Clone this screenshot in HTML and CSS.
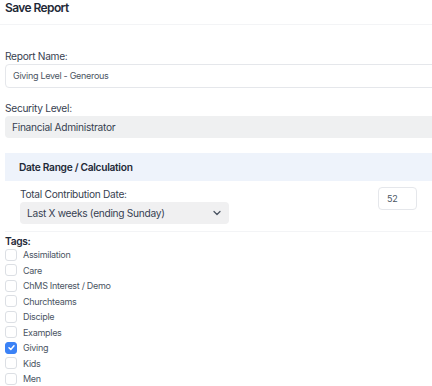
FILE: index.html
```html
<!DOCTYPE html>
<html>
<head>
<meta charset="utf-8">
<link rel="stylesheet" href="styles.css">
</head>
<body>
<div class="page">
  <h1 class="title">Save Report</h1>
  <div class="body">
    <div class="field">
      <label class="label">Report Name:</label>
      <div class="input">Giving Level - Generous</div>
    </div>
    <div class="field">
      <label class="label">Security Level:</label>
      <div class="readonly">Financial Administrator</div>
    </div>
    <div class="section-head">Date Range / Calculation</div>
    <div class="date-row">
      <div class="date-field">
        <label class="label">Total Contribution Date:</label>
        <div class="select">
          <span>Last X weeks (ending Sunday)</span>
          <svg class="chev" width="8" height="6" viewBox="0 0 8 6"><path d="M1 1.5 L4 4.5 L7 1.5" fill="none" stroke="#4b5563" stroke-width="1.3" stroke-linecap="round" stroke-linejoin="round"/></svg>
        </div>
      </div>
      <div class="num">52</div>
    </div>
    <div class="tags">
      <div class="tags-title">Tags:</div>
      <ul class="tag-list">
        <li><span class="cb"></span>Assimilation</li>
        <li><span class="cb"></span>Care</li>
        <li><span class="cb"></span>ChMS Interest / Demo</li>
        <li><span class="cb"></span>Churchteams</li>
        <li><span class="cb"></span>Disciple</li>
        <li><span class="cb"></span>Examples</li>
        <li><span class="cb checked"><svg width="9" height="9" viewBox="0 0 9 9"><path d="M2 4.7 L3.8 6.4 L7 2.8" fill="none" stroke="#fff" stroke-width="1.5" stroke-linecap="round" stroke-linejoin="round"/></svg></span>Giving</li>
        <li><span class="cb"></span>Kids</li>
        <li><span class="cb"></span>Men</li>
      </ul>
    </div>
  </div>
</div>
</body>
</html>
```
FILE: styles.css
```css
html, body {
  margin: 0;
  padding: 0;
  background: #fff;
  overflow: hidden;
}
body {
  font-family: Inter, "Noto Sans", sans-serif;
  color: #374151;
}
.page {
  width: 460px;
}
.title {
  margin: 0;
  padding: 1px 5px 0;
  height: 23px;
  font-size: 12px;
  font-weight: 600;
  letter-spacing: -0.6px;
  line-height: 14px;
  color: #1f2937;
  border-bottom: 1px solid #f3f4f6;
}
.body {
  padding: 25px 0 0 5px;
}
.field {
  display: flex;
  flex-direction: column;
}
.label {
  font-size: 10.2px;
  letter-spacing: -0.3px;
  line-height: 13px;
  color: #374151;
  margin-bottom: 1px;
}
.input {
  height: 22px;
  border: 1px solid #e5e7eb;
  border-radius: 4px;
  padding-left: 7px;
  font-size: 9px;
  letter-spacing: -0.3px;
  line-height: 22px;
  color: #4b5563;
  margin-bottom: 14px;
}
.readonly {
  height: 22px;
  background: #eff0f1;
  border-radius: 4px;
  padding-left: 7px;
  font-size: 10.2px;
  letter-spacing: -0.3px;
  line-height: 22px;
  color: #374151;
  margin-bottom: 15px;
}
.section-head {
  height: 28px;
  background: #eef3fb;
  padding-left: 14px;
  font-size: 10.2px;
  font-weight: 600;
  letter-spacing: -0.3px;
  line-height: 28px;
  color: #1f2937;
}
.date-row {
  display: flex;
  align-items: flex-start;
  padding: 6px 0 7px 15px;
  border-bottom: 1px solid #f3f4f6;
  margin-right: 28px;
}
.date-field {
  display: flex;
  flex-direction: column;
  width: 209px;
  padding-top: 1px;
}
.date-field .label {
  margin-bottom: 1px;
}
.select {
  display: flex;
  align-items: center;
  justify-content: space-between;
  height: 22px;
  background: #f0f0f1;
  border-radius: 4px;
  padding: 0 8px 0 7px;
  font-size: 10.2px;
  letter-spacing: -0.3px;
  color: #374151;
}
.chev {
  display: block;
}
.num {
  margin-left: 149px;
  width: 29px;
  height: 21px;
  border: 1px solid #e5e7eb;
  border-radius: 4px;
  padding-left: 8px;
  font-size: 9px;
  letter-spacing: -0.2px;
  line-height: 21px;
  color: #4b5563;
}
.tags {
  padding-top: 3px;
}
.tags-title {
  font-size: 10.2px;
  font-weight: 600;
  letter-spacing: -0.3px;
  line-height: 13px;
  color: #1f2937;
}
.tag-list {
  list-style: none;
  margin: -1px 0 0;
  padding: 0;
}
.tag-list li {
  display: flex;
  align-items: center;
  height: 15.5px;
  font-size: 9px;
  letter-spacing: -0.3px;
  color: #4b5563;
}
.cb {
  box-sizing: border-box;
  width: 12px;
  height: 12px;
  border: 1px solid #dcdfe4;
  border-radius: 3px;
  margin-right: 6px;
  display: flex;
  align-items: center;
  justify-content: center;
  background: #fff;
}
.cb.checked {
  background: #3b82f6;
  border-color: #3b82f6;
}
.cb svg {
  display: block;
}
```
